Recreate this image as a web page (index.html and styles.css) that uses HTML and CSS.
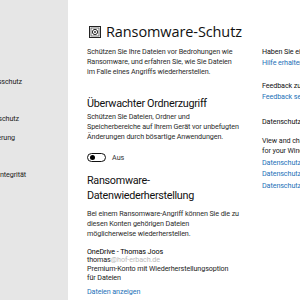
FILE: index.html
```
<!DOCTYPE html>
<html lang="de">
<head>
<meta charset="utf-8">
<link rel="stylesheet" href="styles.css">
</head>
<body>
<div class="app">
  <nav class="sidebar">
    <div class="nav-item n1"><span>Viren- &amp; Bedrohungsschutz</span></div>
    <div class="nav-item n2"><span>Kontoschutz</span></div>
    <div class="nav-item n3"><span>Firewall- &amp; Netzwerkschutz</span></div>
    <div class="nav-item n4"><span>App- &amp; Browsersteuerung</span></div>
    <div class="nav-item n5"><span>Gerätesicherheit</span></div>
    <div class="nav-item n6"><span>Geräteleistung &amp; -integrität</span></div>
  </nav>
  <main class="main">
    <h1 class="title">
      <svg class="title-icon" width="12" height="12" viewBox="0 0 12 12">
        <rect x="0.5" y="0.5" width="11" height="11" fill="none" stroke="#222" stroke-width="1"/>
        <rect x="2" y="2" width="8" height="8" fill="none" stroke="#555" stroke-width="0.8"/>
        <circle cx="6" cy="6" r="2.6" fill="none" stroke="#222" stroke-width="1"/>
        <circle cx="6" cy="6" r="0.9" fill="#222"/>
      </svg>
      <span>Ransomware-Schutz</span>
    </h1>
    <p class="desc d1">Schützen Sie Ihre Dateien vor Bedrohungen wie<br>Ransomware, und erfahren Sie, wie Sie Dateien<br>im Falle eines Angriffs wiederherstellen.</p>

    <h2 class="h2 h-ordner">Überwachter Ordnerzugriff</h2>
    <p class="desc d2">Schützen Sie Dateien, Ordner und<br>Speicherbereiche auf Ihrem Gerät vor unbefugten<br>Änderungen durch bösartige Anwendungen.</p>
    <div class="toggle-row">
      <span class="toggle"><span class="knob"></span></span>
      <span class="toggle-label">Aus</span>
    </div>

    <h2 class="h2 h-recovery">Ransomware-<br>Datenwiederherstellung</h2>
    <p class="desc d3">Bei einem Ransomware-Angriff können Sie die zu<br>diesen Konten gehörigen Dateien<br>möglicherweise wiederherstellen.</p>
    <div class="account">
      <div class="acc-name">OneDrive - Thomas Joos</div>
      <div class="acc-line">thomas<span class="blur">@hof-erbach.de</span></div>
      <div class="acc-line">Premium-Konto mit Wiederherstellungsoption<br>für Dateien</div>
    </div>
    <a class="link files-link">Dateien anzeigen</a>
  </main>
  <aside class="side">
    <div class="side-block b1">
      <div class="side-head">Haben Sie eine Frage?</div>
      <a class="link">Hilfe erhalten</a>
    </div>
    <div class="side-block b2">
      <div class="side-head">Feedback zu Windows-Sicherheit</div>
      <a class="link">Feedback senden</a>
    </div>
    <div class="side-block b3">
      <div class="side-head">Datenschutzeinstellungen ändern</div>
      <div class="side-text">View and change privacy settings<br>for your Windows 10 device.</div>
      <a class="link l1">Datenschutzeinstellungen</a>
      <a class="link l2">Datenschutz-Dashboard</a>
      <a class="link l3">Datenschutzbestimmungen</a>
    </div>
  </aside>
</div>
</body>
</html>
```
FILE: styles.css
```
* { box-sizing: border-box; margin: 0; padding: 0; }
html, body { width: 300px; height: 300px; overflow: hidden; background: #fff; }
body { font-family: Roboto, "Open Sans", sans-serif; color: #000; }

.app { display: flex; width: 300px; height: 300px; overflow: hidden; }

.sidebar {
  flex: 0 0 68px;
  background: #e6e6e6;
  overflow: hidden;
  padding-top: 76px;
  font-size: 7.2px;
  letter-spacing: -0.1px;
  color: #222;
}
.nav-item {
  display: flex;
  justify-content: flex-end;
  height: 18.6px;
  line-height: 12px;
  white-space: nowrap;
}
.n1 { width: 22px; }
.n2 { width: 10px; }
.n3 { width: 19px; }
.n4 { width: 15px; }
.n5 { width: 10px; }
.n6 { width: 26px; }
.n2 span, .n5 span { visibility: hidden; }

.main {
  flex: 0 0 175px;
  padding: 23px 0 0 19px;
  white-space: nowrap;
}
.title {
  display: flex;
  align-items: center;
  gap: 5px;
  font-family: "Open Sans", sans-serif;
  font-size: 14.5px;
  font-weight: 400;
  line-height: 18px;
  color: #111;
  letter-spacing: -0.1px;
}
.title-icon { flex: 0 0 auto; margin-left: 2px; }

.desc {
  font-size: 7.2px;
  letter-spacing: -0.1px;
  line-height: 10px;
  color: #2b2b2b;
}
.d1 { margin-top: 6px; }
.h2 {
  font-size: 10.8px;
  letter-spacing: -0.3px;
  font-weight: 400;
  line-height: 15px;
  color: #111;
}
.h-ordner { margin-top: 18.5px; }
.d2 { margin-top: 1.5px; }

.toggle-row {
  display: flex;
  align-items: center;
  gap: 6px;
  margin-top: 10px;
  height: 10px;
}
.toggle {
  display: flex;
  align-items: center;
  width: 19px;
  height: 9px;
  border: 1px solid #111;
  border-radius: 5px;
  padding-left: 2px;
}
.knob { width: 5px; height: 5px; border-radius: 50%; background: #000; }
.toggle-label { font-size: 7.2px; color: #333; }

.h-recovery { margin-top: 10.5px; }
.d3 { margin-top: 6.5px; }

.account { margin-top: 8.5px; font-size: 7.2px; letter-spacing: -0.1px; line-height: 8.8px; color: #222; }
.acc-name { color: #000; }
.blur { color: #bbb; }

.link {
  display: block;
  font-size: 7.2px;
  letter-spacing: -0.1px;
  line-height: 10px;
  color: #1d72b8;
  text-decoration: none;
}
.files-link { margin-top: 4px; line-height: 9px; }

.side {
  flex: 0 0 auto;
  padding: 47px 0 0 19px;
  white-space: nowrap;
}
.side-head { font-size: 7.2px; letter-spacing: -0.1px; line-height: 10px; color: #111; }
.side-block .link { margin-top: 1px; }
.b2 { margin-top: 13px; }
.b3 { margin-top: 15px; }
.side-text { margin-top: 9px; font-size: 7.2px; letter-spacing: -0.1px; line-height: 10px; color: #222; }
.b3 .link { margin-top: 1.5px; }
```
